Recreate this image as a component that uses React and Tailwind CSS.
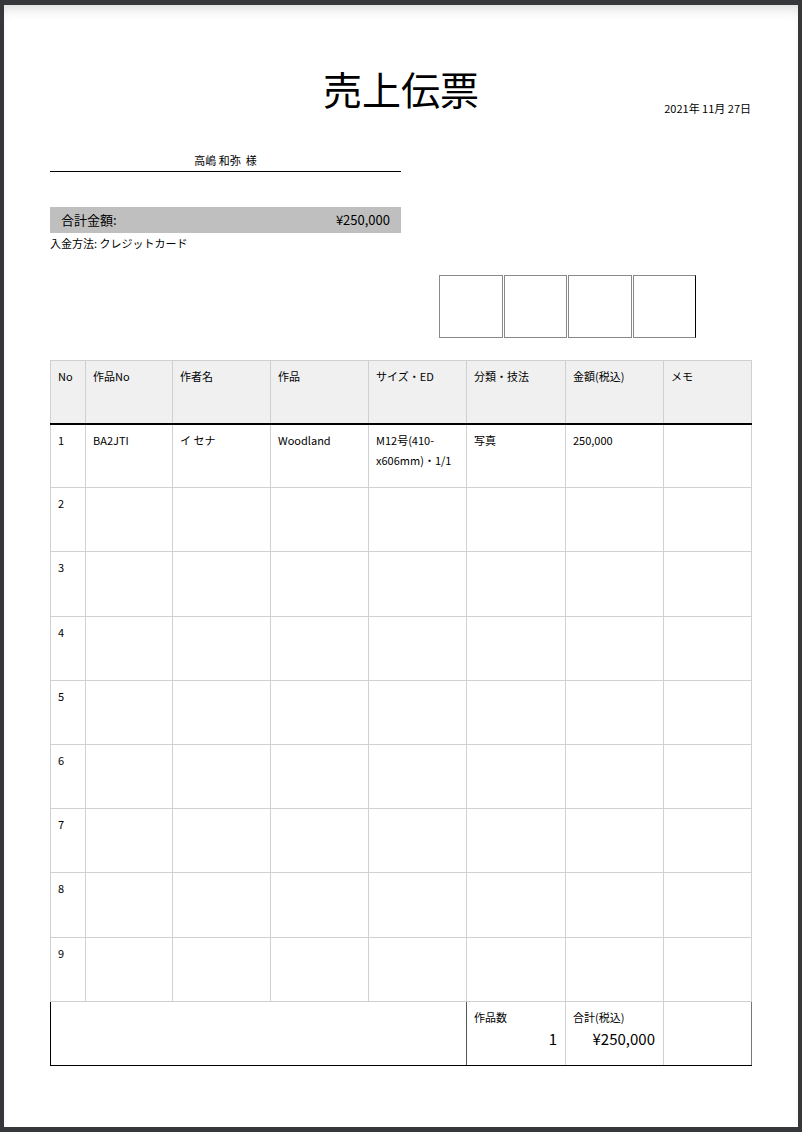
import React from 'react';

const cols = [35, 87, 98, 98, 98, 99, 98, 88];
const heads = ['No', '作品No', '作者名', '作品', 'サイズ・ED', '分類・技法', '金額(税込)', 'メモ'];

const rows = [
  ['1', 'BA2JTI', 'イ セナ', 'Woodland', <>M12号(410-<br />x606mm)・1/1</>, '写真', '250,000', ''],
  ['2'], ['3'], ['4'], ['5'], ['6'], ['7'], ['8'], ['9'],
];

function StampBoxes() {
  return (
    <div className="flex gap-px">
      {[0, 1, 2, 3].map((i) => (
        <div
          key={i}
          className={`w-[63.5px] h-[63px] border-[1.5px] border-[#8a8a8a] ${i === 3 ? 'border-r-black' : ''}`}
        />
      ))}
    </div>
  );
}

export default function App() {
  return (
    <div
      className="min-h-[1132px] bg-[#35373a] pt-[5px] pl-[4px] pr-[4px] pb-[5px]"
      style={{ fontFamily: '"Noto Sans CJK JP", "Noto Sans", sans-serif' }}
    >
      <div className="relative w-[794px] h-[1122px] bg-white px-[46px] text-black shadow-[inset_0_10px_14px_-8px_rgba(0,0,0,0.18)]">
        {/* title */}
        <div className="relative pt-[55px] h-[111px]">
          <h1 className="text-center text-[39px] leading-[56px] font-normal">売上伝票</h1>
          <div className="absolute right-[1px] top-[93px] text-[11px] leading-[20px]">2021年 11月 27日</div>
        </div>

        {/* customer */}
        <div className="w-[351px] border-b-[1.5px] border-black text-center text-[11px] leading-[20px] pb-[1px] mt-[34px] whitespace-pre">
          {'高嶋 和弥  様'}
        </div>

        {/* total */}
        <div className="w-[351px] mt-[35px] h-[26px] bg-[#bfbfbf] flex items-center justify-between px-[11px] text-[13px]">
          <span>合計金額:</span>
          <span>¥250,000</span>
        </div>
        <div className="text-[11px] leading-[18px] mt-px">入金方法: クレジットカード</div>

        {/* stamps */}
        <div className="flex justify-end pr-[56px] mt-[23px]">
          <StampBoxes />
        </div>

        {/* table */}
        <table className="mt-[22px] w-[702px] border-collapse table-fixed text-[11px] leading-[20px]">
          <colgroup>
            {cols.map((w, i) => (
              <col key={i} style={{ width: w }} />
            ))}
          </colgroup>
          <thead>
            <tr className="h-[63px] bg-[#f0f0f0]">
              {heads.map((h) => (
                <th
                  key={h}
                  className="align-top text-left font-normal px-[7px] pt-[5px] border-[1.5px] border-[#d0d0d0] border-b-2 border-b-black"
                >
                  {h}
                </th>
              ))}
            </tr>
          </thead>
          <tbody>
            {rows.map((r, ri) => (
              <tr key={ri} className="h-[64.2px]">
                {cols.map((_, ci) => (
                  <td
                    key={ci}
                    className="align-top px-[7px] pt-[5px] border-[1.5px] border-[#d0d0d0]"
                  >
                    {r[ci] || ''}
                  </td>
                ))}
              </tr>
            ))}
            <tr className="h-[64px]">
              <td colSpan={5} className="border-[1.5px] border-[#555] border-l-black border-b-black" />
              <td className="align-top px-[7px] pt-[5px] border-[1.5px] border-[#d0d0d0] border-t-[#555] border-b-black">
                <div>作品数</div>
                <div className="text-right text-[15px] leading-[24px] pr-[1px]">1</div>
              </td>
              <td className="align-top px-[7px] pt-[5px] border-[1.5px] border-[#d0d0d0] border-t-[#555] border-b-black">
                <div>合計(税込)</div>
                <div className="text-right text-[15px] leading-[24px] pr-[1px]">¥250,000</div>
              </td>
              <td className="border-[1.5px] border-[#d0d0d0] border-t-[#555] border-r-[#777] border-b-black" />
            </tr>
          </tbody>
        </table>
      </div>
    </div>
  );
}
